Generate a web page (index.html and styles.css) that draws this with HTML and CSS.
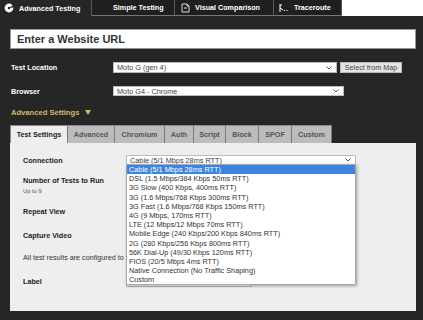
FILE: index.html
```html
<!DOCTYPE html>
<html lang="en">
<head>
  <meta charset="UTF-8">
  <title>Advanced Testing</title>
  <link rel="stylesheet" href="styles.css">
</head>
<body>
  <div class="top-tabs">
    <div class="top-tab tab-advanced active">
      <svg class="tab-icon" width="10" height="10" viewBox="0 0 10 10">
        <circle cx="5" cy="5" r="4.4" fill="#fff"/>
        <path d="M5 5 L8.6 2.6 L9.6 4.4 Z" fill="#262626"/>
        <circle cx="5" cy="5" r="1.2" fill="#262626"/>
      </svg>
      Advanced Testing
    </div>
    <div class="top-tab tab-simple">Simple Testing</div>
    <div class="top-tab tab-visual">
      <svg class="tab-icon" width="9" height="10" viewBox="0 0 9 10">
        <path d="M1 1 H6 L8 3 V9 H1 Z" fill="none" stroke="#ddd" stroke-width="1"/>
        <path d="M6 1 V3 H8" fill="none" stroke="#ddd" stroke-width="1"/>
        <path d="M3 5 H6" stroke="#ddd" stroke-width="1"/>
      </svg>
      Visual Comparison
    </div>
    <div class="top-tab tab-trace">
      <svg class="tab-icon" width="11" height="10" viewBox="0 0 11 10">
        <path d="M2 1 V9 M2 3 L4 1.5 M2 5 L5 7 M6 7.5 H7 M8.5 7.5 H9.5" fill="none" stroke="#fff" stroke-width="1"/>
      </svg>
      Traceroute
    </div>
  </div>

  <div class="main">
    <div class="url-box">Enter a Website URL</div>

    <div class="field field-location">
      <div class="field-label">Test Location</div>
      <div class="select select-location">
        <span>Moto G (gen 4)</span>
        <svg class="chevron" width="6" height="4" viewBox="0 0 6 4"><path d="M0.5 0.5 L3 3 L5.5 0.5" fill="none" stroke="#555" stroke-width="1"/></svg>
      </div>
      <div class="map-btn">Select from Map</div>
    </div>

    <div class="field field-browser">
      <div class="field-label">Browser</div>
      <div class="select select-browser">
        <span>Moto G4 - Chrome</span>
        <svg class="chevron" width="6" height="4" viewBox="0 0 6 4"><path d="M0.5 0.5 L3 3 L5.5 0.5" fill="none" stroke="#555" stroke-width="1"/></svg>
      </div>
    </div>

    <div class="advanced-toggle">
      Advanced Settings
      <svg width="6" height="5" viewBox="0 0 6 5"><path d="M0 0 H6 L3 5 Z" fill="#d6b868"/></svg>
    </div>

    <div class="settings-tabs">
      <div class="settings-tab active w-test">Test Settings</div>
      <div class="settings-tab w-adv">Advanced</div>
      <div class="settings-tab w-chrome">Chromium</div>
      <div class="settings-tab w-auth">Auth</div>
      <div class="settings-tab w-script">Script</div>
      <div class="settings-tab w-block">Block</div>
      <div class="settings-tab w-spof">SPOF</div>
      <div class="settings-tab w-custom">Custom</div>
    </div>

    <div class="panel">
      <div class="row row-connection">
        <div class="row-label">Connection</div>
        <div class="select select-connection">
          <span>Cable (5/1 Mbps 28ms RTT)</span>
          <svg class="chevron" width="6" height="4" viewBox="0 0 6 4"><path d="M0.5 0.5 L3 3 L5.5 0.5" fill="none" stroke="#555" stroke-width="1"/></svg>
        </div>
      </div>

      <div class="row row-runs">
        <div class="row-label">
          Number of Tests to Run
          <div class="hint">Up to 9</div>
        </div>
      </div>

      <div class="row row-repeat">
        <div class="row-label">Repeat View</div>
      </div>

      <div class="row row-video">
        <div class="row-label">Capture Video</div>
      </div>

      <div class="row row-note">
        <span class="note-text">All test results are configured to</span>
      </div>

      <div class="row row-label-field">
        <div class="row-label">Label</div>
        <div class="text-input"></div>
      </div>

      <ul class="dropdown">
        <li class="selected">Cable (5/1 Mbps 28ms RTT)</li>
        <li>DSL (1.5 Mbps/384 Kbps 50ms RTT)</li>
        <li>3G Slow (400 Kbps, 400ms RTT)</li>
        <li>3G (1.6 Mbps/768 Kbps 300ms RTT)</li>
        <li>3G Fast (1.6 Mbps/768 Kbps 150ms RTT)</li>
        <li>4G (9 Mbps, 170ms RTT)</li>
        <li>LTE (12 Mbps/12 Mbps 70ms RTT)</li>
        <li>Mobile Edge (240 Kbps/200 Kbps 840ms RTT)</li>
        <li>2G (280 Kbps/256 Kbps 800ms RTT)</li>
        <li>56K Dial-Up (49/30 Kbps 120ms RTT)</li>
        <li>FIOS (20/5 Mbps 4ms RTT)</li>
        <li>Native Connection (No Traffic Shaping)</li>
        <li>Custom</li>
      </ul>
    </div>
  </div>
</body>
</html>
```

FILE: styles.css
```css
body {
  margin: 0;
  background: #262626;
  font-family: "Liberation Sans", Arial, sans-serif;
  width: 423px;
  height: 320px;
  overflow: hidden;
}

/* top navigation tabs */
.top-tabs {
  display: flex;
  height: 16px;
  background: #fff;
}
.top-tab {
  display: flex;
  align-items: center;
  gap: 5px;
  height: 16px;
  box-sizing: border-box;
  background: #1f1f1f;
  color: #fff;
  font-size: 7.2px;
  font-weight: bold;
  border-right: 1px solid #5a5a5a;
  border-bottom: 1px solid #777;
}
.top-tab.active {
  background: #262626;
  border-bottom: none;
}
.tab-icon {
  flex: none;
}
.tab-advanced {
  width: 92px;
  padding-left: 4px;
}
.tab-simple {
  width: 83px;
  padding-left: 21px;
}
.tab-visual {
  width: 99px;
  padding-left: 6px;
}
.tab-trace {
  width: 68px;
  padding-left: 4px;
}

.main {
  padding: 13px 7px 0 10px;
}
.url-box {
  height: 20px;
  box-sizing: border-box;
  background: #fff;
  border: 1px solid #999;
  padding-left: 6px;
  display: flex;
  align-items: center;
  font-size: 11px;
  font-weight: bold;
  color: #333;
}

/* location / browser */
.field {
  display: flex;
  align-items: center;
  height: 11px;
}
.field-location {
  margin-top: 13px;
}
.field-browser {
  margin-top: 13px;
  height: 10px;
}
.field-label {
  width: 102px;
  padding-left: 1px;
  color: #fff;
  font-size: 7.2px;
  font-weight: bold;
}
.select {
  height: 100%;
  box-sizing: border-box;
  background: #fff;
  border: 1px solid #bbb;
  padding: 0 4px 0 3px;
  display: flex;
  align-items: center;
  justify-content: space-between;
  font-size: 7.3px;
  color: #444;
}
.select-location {
  width: 224px;
}
.select-browser {
  width: 231px;
}
.map-btn {
  margin-left: 3px;
  width: 62px;
  height: 11px;
  box-sizing: border-box;
  background: #e4e4e4;
  border: 1px solid #bbb;
  font-size: 7.2px;
  color: #444;
  display: flex;
  align-items: center;
  justify-content: center;
}

.advanced-toggle {
  margin-top: 12px;
  padding-left: 1px;
  height: 9px;
  display: flex;
  align-items: center;
  gap: 6px;
  color: #d6b868;
  font-size: 7.6px;
  font-weight: bold;
}

/* settings tabs */
.settings-tabs {
  display: flex;
  margin-top: 8px;
  height: 18px;
}
.settings-tab {
  box-sizing: border-box;
  height: 18px;
  background: #bcbcbc;
  border-top: 1px solid #8a8a8a;
  border-right: 1px solid #7a7a7a;
  color: #555;
  font-size: 7.2px;
  font-weight: bold;
  display: flex;
  align-items: center;
  justify-content: center;
}
.settings-tab.active {
  background: #eee;
  color: #222;
  border-left: 1px solid #8a8a8a;
}
.w-test { width: 58px; }
.w-adv { width: 47px; }
.w-chrome { width: 50px; }
.w-auth { width: 29px; }
.w-script { width: 32px; }
.w-block { width: 33px; }
.w-spof { width: 33px; }
.w-custom { width: 40px; }

/* settings panel */
.panel {
  position: relative;
  height: 168px;
  box-sizing: border-box;
  background: #eee;
  padding: 12px 0 0 13px;
}
.row {
  display: flex;
  align-items: center;
  font-size: 7.2px;
  color: #333;
}
.row-label {
  width: 103px;
  font-weight: bold;
  color: #222;
}
.hint {
  margin-top: 3px;
  font-size: 5.8px;
  font-weight: normal;
  color: #555;
}
.row-connection {
  height: 10px;
}
.select-connection {
  width: 230px;
  font-size: 7.3px;
}
.row-runs {
  margin-top: 11px;
  height: 18px;
}
.row-repeat {
  margin-top: 12px;
  height: 10px;
}
.row-video {
  margin-top: 14px;
  height: 10px;
}
.row-note {
  margin-top: 12px;
  height: 10px;
  white-space: nowrap;
}
.row-label-field {
  margin-top: 14px;
  height: 11px;
}
.text-input {
  width: 126px;
  height: 11px;
  box-sizing: border-box;
  background: #fff;
  border: 1px solid #bbb;
}

/* open connection list */
.dropdown {
  position: absolute;
  top: 21px;
  left: 116px;
  width: 230px;
  margin: 0;
  padding: 0;
  list-style: none;
  box-sizing: border-box;
  background: #fff;
  border: 1px solid #a8a8a8;
  box-shadow: 1px 1px 3px rgba(0, 0, 0, 0.35);
}
.dropdown li {
  height: 9.2px;
  line-height: 9.2px;
  padding-left: 2px;
  font-size: 7.3px;
  color: #333;
  white-space: nowrap;
}
.dropdown li.selected {
  background: #3b84e0;
  color: #fff;
}
```
